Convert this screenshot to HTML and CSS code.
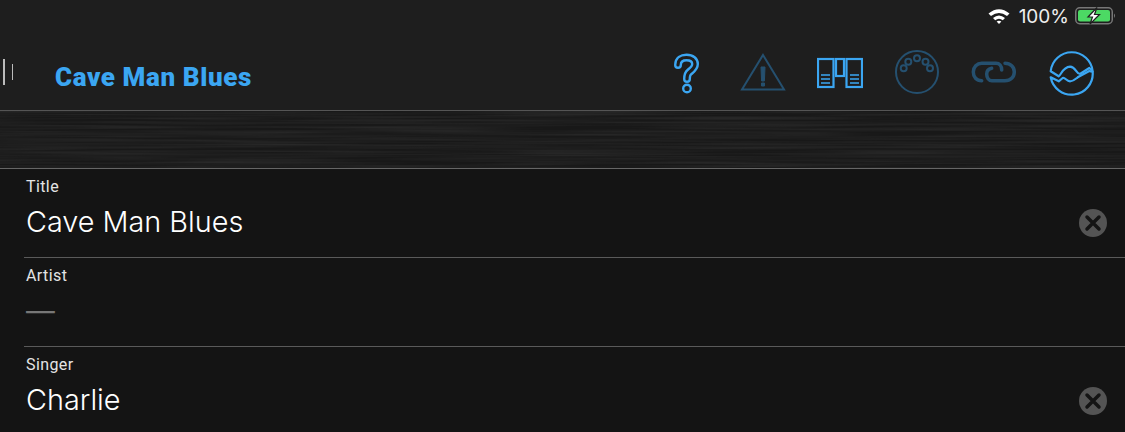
FILE: index.html
```html
<!DOCTYPE html>
<html lang="en">
<head>
    <meta charset="UTF-8">
    <title>Cave Man Blues</title>
    <link rel="stylesheet" href="styles.css">
</head>
<body>
    <div class="header">
        <div class="status-bar">
            <svg class="wifi" width="22" height="16" viewBox="0 0 22 16">
                <path d="M0.500 5.500 Q11 -3 21.500 5.500 L19 8 Q11 2 3 8 Z" fill="#fff"/>
                <path d="M5 10 Q11 5 17 10 L14.800 12.300 Q11 9.300 7.200 12.300 Z" fill="#fff"/>
                <path d="M8.600 13.600 Q11 11.800 13.400 13.600 L11 16 Z" fill="#fff"/>
            </svg>
            <span class="battery-text">100%</span>
            <svg class="battery" width="42" height="18" viewBox="0 0 42 18">
                <rect x="1.750" y="0.750" width="36.500" height="16" rx="4" fill="none" stroke="#777" stroke-width="1.500"/>
                <rect x="4" y="3" width="32" height="11.500" rx="2" fill="#4cd964"/>
                <path d="M23 0.500 L14 10 H18.500 L16 17 L25.500 7.500 H20.500 Z" fill="#fff" stroke="#1e1e1e" stroke-width="1.200"/>
                <path d="M40 6.500 Q42 8.700 40 11 Z" fill="#777"/>
            </svg>
        </div>
        <div class="nav-bar">
            <div class="cursor"><span class="tick"></span><span class="tick tick-small"></span></div>
            <div class="song-title">Cave Man Blues</div>
            <div class="icons">
                <div class="icon">
                    <svg width="46" height="46" viewBox="0 0 46 46" fill="none" stroke-linecap="round" stroke-linejoin="round">
                        <path d="M15 15 C15 9.500 19 7.500 23.500 7.500 C29 7.500 32 10.500 32 14 C32 18 29 20 26.500 22 C24.500 23.500 24 25 24 29" stroke="#3ba6f2" stroke-width="8"/>
                        <path d="M15 15 C15 9.500 19 7.500 23.500 7.500 C29 7.500 32 10.500 32 14 C32 18 29 20 26.500 22 C24.500 23.500 24 25 24 29" stroke="#1e1e1e" stroke-width="3.200"/>
                        <circle cx="24" cy="38.500" r="3.800" stroke="#3ba6f2" stroke-width="2.400"/>
                    </svg>
                </div>
                <div class="icon">
                    <svg width="46" height="46" viewBox="0 0 46 46" fill="none" stroke="#25506f" stroke-width="2">
                        <path d="M23 5 L44 39.500 H2 Z"/>
                        <path d="M21 17 H25 L24.400 31 H21.600 Z M21.500 33 H24.500 V36 H21.500 Z" fill="#25506f" stroke-width="1"/>
                    </svg>
                </div>
                <div class="icon">
                    <svg width="46" height="46" viewBox="0 0 46 46" fill="none" stroke="#3ba6f2" stroke-width="2.200">
                        <rect x="1" y="9" width="15.500" height="28"/>
                        <rect x="29.500" y="9" width="15.500" height="28"/>
                        <rect x="19" y="9" width="8" height="17"/>
                        <path d="M4 25 H13 M4 29 H13 M4 33 H13 M33 25 H42 M33 29 H42 M33 33 H42" stroke-width="1.500"/>
                    </svg>
                </div>
                <div class="icon">
                    <svg width="46" height="46" viewBox="0 0 46 46" fill="none" stroke="#25506f" stroke-width="2">
                        <circle cx="23" cy="22" r="21"/>
                        <circle cx="9.700" cy="18.300" r="3"/>
                        <circle cx="14.300" cy="11.700" r="3"/>
                        <circle cx="23" cy="8.300" r="3"/>
                        <circle cx="31.500" cy="11.700" r="3"/>
                        <circle cx="36" cy="18.300" r="3"/>
                    </svg>
                </div>
                <div class="icon">
                    <svg width="46" height="46" viewBox="0 0 46 46" fill="none" stroke="#25506f" stroke-width="3.500" stroke-linecap="round">
                        <path d="M10.700 30.700 C5.500 30.700 2.300 27 2.300 22 C2.300 17 6 13.300 10.700 13.300 H25 C28.500 13.300 30.700 16 30.700 20"/>
                        <path d="M34 13.300 C39.500 13.300 43.300 17 43.300 22 C43.300 27 39.500 30.700 34 30.700 H21 C17.500 30.700 15.700 27.500 15.700 24 C15.700 21 17.500 19 20.700 18.300"/>
                    </svg>
                </div>
                <div class="icon">
                    <svg width="46" height="46" viewBox="0 0 46 46" fill="none" stroke="#3ba6f2" stroke-width="2.200" stroke-linejoin="round">
                        <path d="M2.700 21.300 L10.700 26.300 C13 25 15 17 22 16.700 C28 17 28 24 32 24 L41.300 18 L44.700 21.300 A21.100 21.100 0 0 0 2.700 21.300 Z"/>
                        <path d="M2.700 27.300 L10.700 31.300 L14.700 28 C17 27 18.500 31.300 22 31.300 C25.500 31.300 27 29.500 29.700 27.300 L41.300 21 L44.700 22 A21.200 21.200 0 0 1 2.700 27.300 Z"/>
                    </svg>
                </div>
            </div>
        </div>
    </div>

    <svg class="texture" width="1125" height="57">
        <filter id="brushed">
            <feTurbulence type="fractalNoise" baseFrequency="0.006 0.45" numOctaves="2" seed="4"/>
            <feColorMatrix values="0 0 0 0 1  0 0 0 0 1  0 0 0 0 1  0.12 0 0 0 -0.035"/>
        </filter>
        <rect width="1125" height="57" fill="#181818"/>
        <rect width="1125" height="57" filter="url(#brushed)"/>
    </svg>

    <div class="form">
        <div class="row">
            <div class="row-text">
                <div class="label">Title</div>
                <div class="value">Cave Man Blues</div>
            </div>
            <svg class="clear" width="28" height="28" viewBox="0 0 28 28">
                <circle cx="14" cy="14" r="14" fill="#545454"/>
                <path d="M8 8 L20 20 M20 8 L8 20" stroke="#141414" stroke-width="3.500" stroke-linecap="round"/>
            </svg>
        </div>
        <div class="row">
            <div class="row-text">
                <div class="label">Artist</div>
                <div class="value value-empty">—</div>
            </div>
        </div>
        <div class="row">
            <div class="row-text">
                <div class="label">Singer</div>
                <div class="value">Charlie</div>
            </div>
            <svg class="clear" width="28" height="28" viewBox="0 0 28 28">
                <circle cx="14" cy="14" r="14" fill="#545454"/>
                <path d="M8 8 L20 20 M20 8 L8 20" stroke="#141414" stroke-width="3.500" stroke-linecap="round"/>
            </svg>
        </div>
    </div>
</body>
</html>
```

FILE: styles.css
```css
html, body { height: 100%; }
body {
    margin: 0;
    background: #141414;
    color: #fff;
    font-family: Roboto, "Liberation Sans", sans-serif;
    overflow: hidden;
}
svg { display: block; }

.header {
    height: 110px;
    background: #1e1e1e;
    border-bottom: 1px solid #555;
}
.status-bar {
    display: flex;
    justify-content: flex-end;
    align-items: center;
    gap: 9px;
    height: 32px;
    padding-right: 9px;
}
.battery-text { font-family: Inter, sans-serif; font-size: 19px; color: #eee; }
.battery { margin-left: -4px; }

.nav-bar {
    display: flex;
    align-items: center;
    height: 78px;
}
.cursor {
    display: flex;
    align-items: center;
    gap: 7px;
    width: 55px;
    padding-left: 3px;
    box-sizing: border-box;
    margin-top: 1px;
}
.tick { width: 2px; height: 26px; background: #bbb; }
.tick-small { width: 1px; height: 16px; }
.song-title {
    font-size: 26px;
    font-weight: 900;
    color: #3ba6f2;
    letter-spacing: 0.6px;
    margin-top: 12px;
}
.icons {
    display: flex;
    margin-left: auto;
    margin-right: 16px;
    margin-top: 4px;
}
.icon {
    width: 77px;
    display: flex;
    justify-content: center;
}

.texture { border-bottom: 1px solid #666; }

.row {
    position: relative;
    display: flex;
    align-items: center;
    height: 89px;
    padding-left: 26px;
    padding-right: 18px;
}
.row::after {
    content: "";
    position: absolute;
    left: 24px;
    right: 0;
    bottom: 0;
    height: 1px;
    background: #5a5a5a;
}
.row-text { flex: 1; align-self: flex-start; padding-top: 9px; }
.label {
    font-size: 16px;
    color: #e4e4e4;
    line-height: 18px;
    letter-spacing: 0.4px;
}
.value {
    font-family: Inter, sans-serif;
    font-size: 28.800px;
    font-weight: 300;
    line-height: 36px;
    margin-top: 8px;
}
.value-empty { color: #777; font-weight: 400; }
.clear { margin-top: 19px; }
```
